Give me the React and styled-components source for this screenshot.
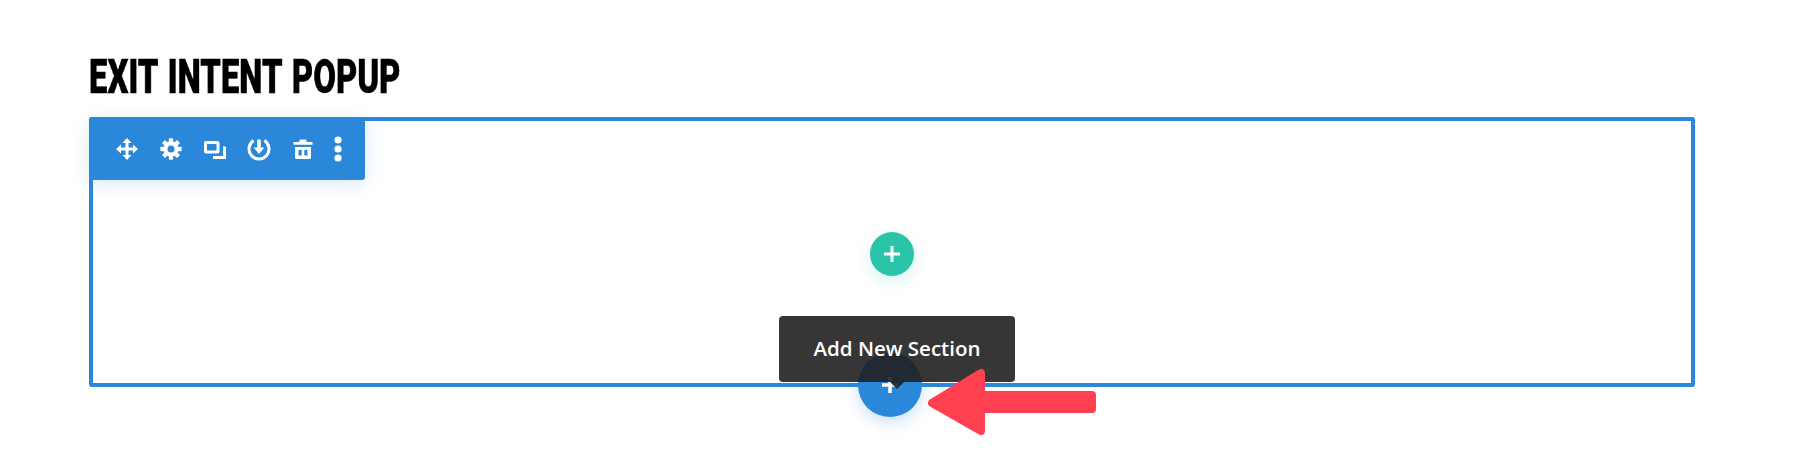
import React from 'react';
import styled, { createGlobalStyle } from 'styled-components';

const GlobalStyle = createGlobalStyle`
  html, body {
    margin: 0;
    background: #fff;
  }
`;

const Page = styled.div`
  width: 1800px;
  height: 474px;
  padding: 51px 105px 0 89px;
  box-sizing: border-box;
  overflow: hidden;
`;

const Heading = styled.h1`
  margin: 0 0 15px;
  height: 51px;
  font-family: "Roboto", "Liberation Sans", sans-serif;
  font-weight: 900;
  font-size: 49px;
  line-height: 51px;
  word-spacing: 3px;
  color: #000;
  white-space: nowrap;
  -webkit-text-stroke: 0.5px #000;
  transform: scaleX(0.67);
  transform-origin: left center;
  will-change: transform;
`;

const Section = styled.div`
  position: relative;
  height: 270px;
  box-sizing: border-box;
  padding-top: 3px;
  border: 4px solid #2b87da;
  border-radius: 3px;
  display: flex;
  align-items: center;
  justify-content: center;
`;

const Toolbar = styled.div`
  position: absolute;
  left: -4px;
  top: -4px;
  height: 63px;
  padding: 0 14px 0 16px;
  box-sizing: border-box;
  display: flex;
  align-items: center;
  background: #2b87da;
  border-radius: 3px;
  box-shadow: 0 4px 18px rgba(43, 135, 218, 0.18);
`;

const ToolButton = styled.span`
  width: ${(p) => (p.$narrow ? 26 : 44)}px;
  height: 22px;
  display: flex;
  align-items: center;
  justify-content: center;

  & svg {
    display: block;
  }
`;

const RoundButton = styled.div`
  width: ${(p) => p.$size}px;
  height: ${(p) => p.$size}px;
  border-radius: 50%;
  background: ${(p) => p.$color};
  box-shadow: 0 5px 16px ${(p) => p.$glow};
  display: flex;
  align-items: center;
  justify-content: center;
`;

const AddSectionButton = styled(RoundButton)`
  position: absolute;
  left: 765px;
  top: 232px;
`;

const Tooltip = styled.div`
  position: absolute;
  left: 686px;
  top: 195px;
  width: 236px;
  height: 66px;
  padding-bottom: 2px;
  box-sizing: border-box;
  display: flex;
  align-items: center;
  justify-content: center;
  background: rgba(32, 32, 32, 0.9);
  border-radius: 4px;
  color: #fff;
  font-family: "Open Sans", sans-serif;
  font-weight: 600;
  font-size: 20.5px;

  &::after {
    content: "";
    position: absolute;
    left: 111px;
    top: 66px;
    border: 7px solid transparent;
    border-bottom: 0;
    border-top-color: rgba(32, 32, 32, 0.9);
  }
`;

const Arrow = styled.svg`
  position: absolute;
  left: 832px;
  top: 246px;
`;

const MoveIcon = () => (
  <svg width="22" height="22" viewBox="0 0 22 22" fill="#fff">
    <path d="M3 11h16M11 3v16" stroke="#fff" strokeWidth="3" />
    <path d="M11 0l4.5 5h-9zM11 22l-4.5-5h9zM0 11l5-4.5v9zM22 11l-5 4.5v-9z" />
  </svg>
);

const GearIcon = () => (
  <svg width="22" height="22" viewBox="0 0 22 22" fill="#fff">
    <circle cx="11" cy="11" r="5.5" fill="none" stroke="#fff" strokeWidth="4" />
    {[0, 45, 90, 135, 180, 225, 270, 315].map((a) => (
      <rect key={a} x="8.8" y="0.3" width="4.4" height="5.2" rx="0.8" transform={`rotate(${a} 11 11)`} />
    ))}
  </svg>
);

const CloneIcon = () => (
  <svg width="22" height="22" viewBox="0 0 22 22" fill="none" stroke="#fff" strokeWidth="3">
    <rect x="1.5" y="4.5" width="12.5" height="9.5" rx="0.6" />
    <path d="M20.5 8.5v11H9" />
  </svg>
);

const SaveIcon = () => (
  <svg width="24" height="24" viewBox="0 0 24 24" fill="none" stroke="#fff">
    <path d="M6.6 3.6a10 10 0 1 0 10.8 0" strokeWidth="3" />
    <path d="M12 2.5v9" strokeWidth="3.6" />
    <path d="M6.6 10.6h10.8L12 17z" fill="#fff" stroke="none" />
  </svg>
);

const TrashIcon = () => (
  <svg width="22" height="22" viewBox="0 0 22 22" fill="#fff">
    <path d="M8 1.5h6l1 2.5h5.5v2.8h-19V4H7z" />
    <path
      fillRule="evenodd"
      d="M3 9h16v10.5a1.5 1.5 0 0 1-1.5 1.5h-13A1.5 1.5 0 0 1 3 19.5zM6.5 12v5.5h3.2V12zM12.3 12v5.5h3.2V12z"
    />
  </svg>
);

const DotsIcon = () => (
  <svg width="8" height="26" viewBox="0 0 8 26" fill="#fff">
    <circle cx="4" cy="4" r="3.6" />
    <circle cx="4" cy="13" r="3.6" />
    <circle cx="4" cy="22" r="3.6" />
  </svg>
);

const PlusIcon = ({ size, weight }) => (
  <svg width={size} height={size} viewBox={`0 0 ${size} ${size}`} stroke="#fff" strokeWidth={weight}>
    <path d={`M0 ${size / 2}H${size}M${size / 2} 0V${size}`} />
  </svg>
);

const tools = [
  { key: 'move', icon: <MoveIcon /> },
  { key: 'settings', icon: <GearIcon /> },
  { key: 'clone', icon: <CloneIcon /> },
  { key: 'save', icon: <SaveIcon /> },
  { key: 'delete', icon: <TrashIcon /> },
  { key: 'more', icon: <DotsIcon />, narrow: true },
];

const App = () => (
  <>
    <GlobalStyle />
    <Page>
      <Heading>EXIT INTENT POPUP</Heading>
      <Section>
        <Toolbar>
          {tools.map((t) => (
            <ToolButton key={t.key} $narrow={t.narrow}>
              {t.icon}
            </ToolButton>
          ))}
        </Toolbar>
        <RoundButton $size={44} $color="#29c4a9" $glow="rgba(41, 196, 169, 0.18)">
          <PlusIcon size={16} weight={3} />
        </RoundButton>
        <AddSectionButton $size={64} $color="#2b87da" $glow="rgba(43, 135, 218, 0.25)">
          <PlusIcon size={16} weight={3.6} />
        </AddSectionButton>
        <Tooltip>Add New Section</Tooltip>
        <Arrow width="176" height="74" viewBox="0 0 176 74">
          <path
            d="M7 36L56 6V28H167V42H56V64Z"
            fill="#ff4050"
            stroke="#ff4050"
            strokeWidth="8"
            strokeLinejoin="round"
          />
        </Arrow>
      </Section>
    </Page>
  </>
);

export default App;
